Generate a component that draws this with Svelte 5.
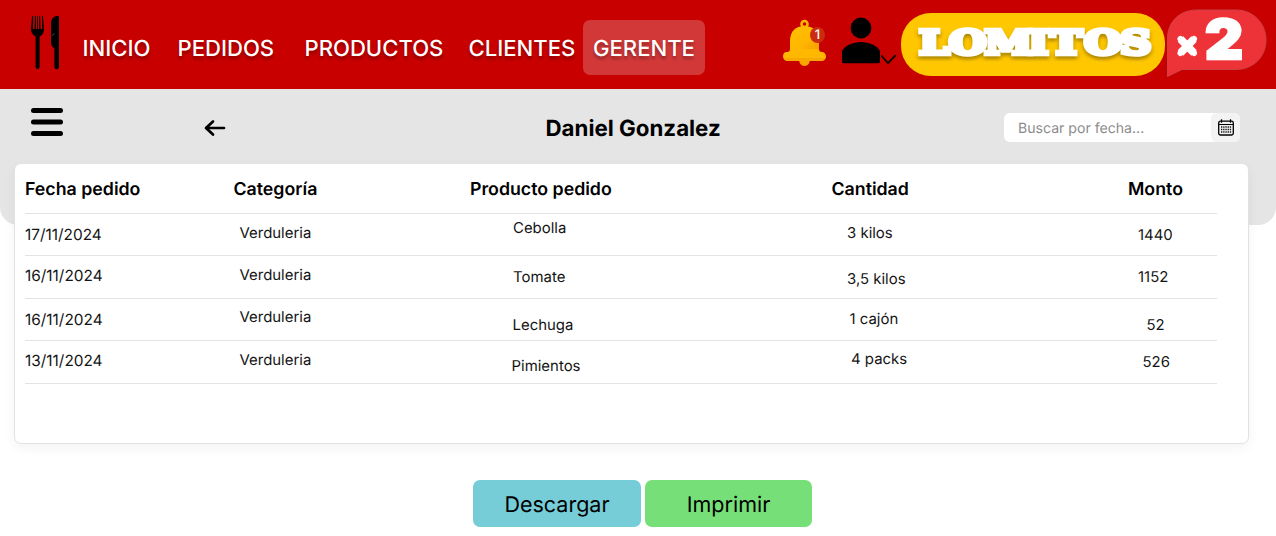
<script>
  const nav = [
    { label: 'INICIO', width: 95 },
    { label: 'PEDIDOS', width: 127 },
    { label: 'PRODUCTOS', width: 164 },
    { label: 'CLIENTES', width: 114.5 },
    { label: 'GERENTE', width: 122, active: true },
  ];
  const headings = ['Fecha pedido', 'Categoría', 'Producto pedido', 'Cantidad', 'Monto'];
  // Each cell: text, left inset within its column, top inset within its row
  const rows = [
    [['17/11/2024', 0, 11.5], ['Verduleria', 6, 9.5], ['Cebolla', 43, 4.5], ['3 kilos', 15.5, 9.5], ['1440', 10, 11]],
    [['16/11/2024', 0, 10], ['Verduleria', 6, 9], ['Tomate', 43, 11], ['3,5 kilos', 15.5, 13], ['1152', 10, 11]],
    [['16/11/2024', 0, 11.5], ['Verduleria', 6, 8.5], ['Lechuga', 42.5, 16.5], ['1 cajón', 18, 10], ['52', 18.5, 16.5]],
    [['13/11/2024', 0, 10], ['Verduleria', 6, 9], ['Pimientos', 41.5, 15], ['4 packs', 19.5, 8], ['526', 14.5, 11]],
  ];
</script>

<div class="page">
  <header>
    <svg class="cutlery" width="30" height="56" viewBox="0 0 30 56">
      <path d="M2.100 1 1 14c0 4 2 6 4.600 7.600V52a2 2 0 0 0 4 0V21.600C12.400 20 14 18 14 14L12.900 1h-1l.3 13h-1.600L10.100 1h-1L9 14H7.900L7.800 1H7.100L7 14H5.900L5.800 1H4.900L4.600 14H3L3.200 1z" />
      <path d="M29 1v51a2.300 2.300 0 0 1-4.600 0V33c-2.200-.5-3.400-3-3.400-6V8c0-4 3-7 6-7z" />
      <path d="m21.500 21 3-2.500" stroke="#555" stroke-width=".8" />
    </svg>
    <nav>
      {#each nav as item}
        <a class:active={item.active} style:width="{item.width}px">{item.label}</a>
      {/each}
    </nav>
    <div class="bell">
      <svg width="44" height="48" viewBox="0 0 44 48">
        <defs>
          <linearGradient id="gold" x1="0" y1="0" x2="1" y2="1">
            <stop offset="0" stop-color="#ffc000" /><stop offset=".55" stop-color="#ffb700" /><stop offset="1" stop-color="#f59a00" />
          </linearGradient>
        </defs>
        <circle cx="21.500" cy="5" r="3" fill="none" stroke="#fcb500" stroke-width="2.600" />
        <path d="M16 40h11c0 4-2 7-5.500 7S16 44 16 40z" fill="#f8a600" />
        <path d="M7 34V22C7 12 13 7 21.500 7S36 12 36 22v12z" fill="url(#gold)" />
        <path d="M7 30c0 2-1 3-3 3-3 0-4 2-4 4.500S2 42 5 42h33c3 0 5-2 5-4.500S41 33 39 33c-2 0-3-1-3-3z" fill="#ffb800" />
        <path d="M1 39h41c-1 2-2 3-4 3H5c-2 0-3-1-4-3z" fill="#f9a800" />
      </svg>
      <span class="count">1</span>
    </div>
    <svg class="user" width="56" height="49" viewBox="0 0 56 49">
      <circle cx="20" cy="11" r="10.400" />
      <path d="M1 34c3-5.500 11-9 19-9s16 3.500 19 9v10.500c0 1-.6 1.700-1.500 1.700h-35C1.600 46.200 1 45.500 1 44.500z" />
      <path d="m40.300 38.500 6.700 7.700 7.700-8" fill="none" stroke="#000" stroke-width="1.700" />
    </svg>
    <div class="brand">
      <svg width="264" height="64" viewBox="0 0 264 64">
        <text transform="scale(1.3 1)" x="14 37 64.500 97.800 114.800 141 168.700" y="40.500">LOMITOS</text>
      </svg>
    </div>
    <svg class="times" width="102" height="70" viewBox="0 0 102 70">
      <path d="M31 1h39c17 0 30 13 30 30S87 60.500 70 60.500H16L1.500 67.500V29C2 12 14 1 31 1z" fill="#ee3338" stroke="#c94247" />
      <path d="m14.500 30 13.500 14m0-14-13.500 14" fill="none" stroke="#fff" stroke-width="7.600" />
      <path d="m14.500 30 13.500 14m0-14-13.500 14" fill="none" stroke="#fff" stroke-width="6" stroke-linecap="round" />
      <text x="39" y="49.500" textLength="38" lengthAdjust="spacingAndGlyphs">2</text>
    </svg>
  </header>

  <section class="panel">
    <div class="toolbar">
      <svg class="menu" width="32" height="30" viewBox="0 0 32 30"><path d="M2.500 3.500h27M2.500 15h27M2.500 26.500h27" stroke="#000" stroke-width="5" stroke-linecap="round" /></svg>
      <svg class="back" width="22" height="18" viewBox="0 0 22 18"><path d="M20 9H2m7-6.500L2 9l7 6.500" fill="none" stroke="#000" stroke-width="2.700" stroke-linecap="round" stroke-linejoin="round" /></svg>
      <h1>Daniel Gonzalez</h1>
      <div class="search">
        <span>Buscar por fecha...</span>
        <button aria-label="Fecha">
          <svg width="16" height="17" viewBox="0 0 16 17">
            <rect x=".7" y="2.200" width="14.600" height="13.800" rx="1.800" fill="none" stroke="#000" stroke-width="1.300" />
            <path d="M1 5.500h14M3.500.3v3.400M12.500.3v3.400" stroke="#000" stroke-width="1.200" />
            <path d="M3 8h10.500M3 10.500h10.500M3 13h10.500" stroke="#111" stroke-width="1.300" stroke-dasharray="1.300 .9" />
          </svg>
        </button>
      </div>
    </div>
  </section>

  <main>
    <div class="row head">
      {#each headings as h}<b>{h}</b>{/each}
    </div>
    {#each rows as row}
      <div class="row">
        {#each row as [text, left, top]}
          <span style:padding-left="{left}px" style:padding-top="{top}px">{text}</span>
        {/each}
      </div>
    {/each}
  </main>

  <div class="actions">
    <button class="download">Descargar</button>
    <button class="print">Imprimir</button>
  </div>
</div>

<style>
  :global(body) { margin: 0; background: #fff; }
  .page { width: 1276px; height: 536px; overflow: hidden; font-family: Inter, sans-serif; color: #000; text-rendering: geometricPrecision; }
  svg { display: block; flex: none; overflow: visible; }
  button { font-family: inherit; border: 0; padding: 0; text-rendering: inherit; }
  header { height: 89px; background: #c80000; display: flex; align-items: flex-start; box-sizing: border-box; }
  .cutlery { margin: 15px 0 0 30px; }
  nav { display: flex; margin: 20px 0 0 22.500px; width: 623px; }
  nav a { box-sizing: border-box; height: 55px; line-height: 58px; font-size: 22.100px; font-weight: 450; color: #fff; text-shadow: 0 3px 3px rgba(0, 0, 0, .3); white-space: nowrap; }
  nav .active { background: #d23838; border-radius: 7px; padding-left: 10px; }
  .bell { position: relative; margin: 19px 0 0 77.500px; width: 44px; }
  .count { position: absolute; left: 27px; top: 8px; width: 15px; height: 16px; border-radius: 50%; background: #cb2c10; color: #fff; font-size: 13px; font-weight: 500; line-height: 17px; text-align: center; }
  .user { margin: 17px 0 0 14px; }
  .brand { margin: 13px 0 0 4px; width: 264px; height: 63px; border-radius: 30px; background: #ffc700; }
  .brand text { font: 700 33px "DejaVu Serif", serif; fill: #fff; stroke: #fff; stroke-width: 4.600px; filter: drop-shadow(0 3px 1.500px rgba(0, 0, 0, .3)); }
  .times { margin: 9px 0 0 1px; }
  .times text { font: 900 55px Inter, sans-serif; fill: #fff; stroke: #fff; stroke-width: 2.500px; }
  .panel { height: 136px; background: #e5e5e5; border-radius: 0 0 18px 18px; }
  .toolbar { display: flex; align-items: flex-start; }
  .menu { margin: 18px 0 0 31px; }
  .back { margin: 30px 0 0 141px; }
  h1 { margin: 25px 0 0 319.500px; width: 458.500px; font-size: 22.300px; line-height: 30px; font-weight: 700; white-space: nowrap; }
  .search { margin-top: 24px; width: 236px; height: 29px; border-radius: 6px; background: #fff; display: flex; justify-content: space-between; font-size: 14.100px; line-height: 31px; color: #8b8b8b; }
  .search span { padding-left: 14px; }
  .search button { width: 29px; height: 29px; background: #f3f3f3; border-radius: 6px; display: flex; align-items: center; justify-content: center; }
  main { position: relative; box-sizing: border-box; margin: -62px 0 0 14px; width: 1235px; height: 281px; background: #fff; border: 1px solid #e2e2e2; border-radius: 7px; padding: 0 31px 0 10px; box-shadow: 0 4px 12px rgba(0, 0, 0, .05); }
  .row { box-sizing: border-box; height: 42.500px; border-bottom: 1px solid #e3e3e3; display: grid; grid-template-columns: 208.500px 236.500px 361.500px 296.500px 1fr; font-size: 14.950px; line-height: 20px; color: #151515; white-space: nowrap; }
  .row span:first-child { font-size: 15.400px; }
  .head { height: 49.500px; font-size: 17.750px; line-height: 52px; color: #000; }
  .head b { font-weight: 600; height: 49px; }
  .actions { display: flex; gap: 4px; margin: 36px 0 0 473px; }
  .actions button { width: 168px; height: 47px; border-radius: 7px; padding-top: 2px; font-size: 21.500px; font-weight: 430; color: #000; }
  .actions .print { width: 167px; }
  .download { background: #76ccd7; }
  .print { background: #77df78; }
</style>
